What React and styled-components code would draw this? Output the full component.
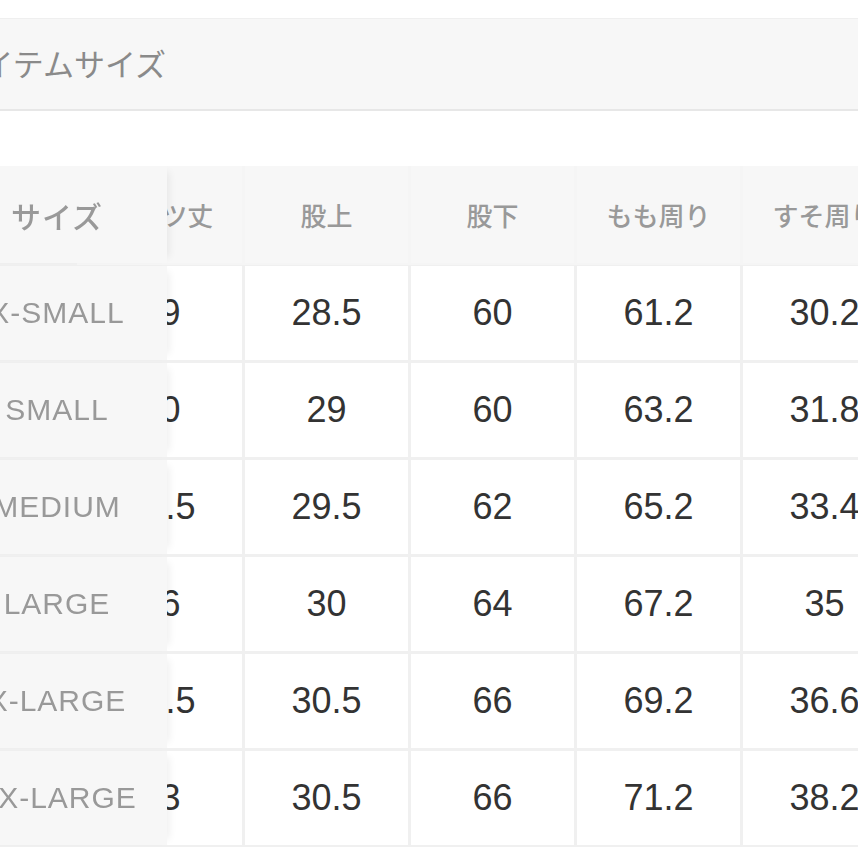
import { useLayoutEffect, useRef } from "react";
import styled, { createGlobalStyle, css } from "styled-components";

const GlobalStyle = createGlobalStyle`
  html, body {
    margin: 0;
    padding: 0;
    background: #ffffff;
    overflow: hidden;
  }
  body {
    font-family: "Liberation Sans", "Noto Sans CJK JP", sans-serif;
  }
`;

const Page = styled.div`
  width: 858px;
  height: 858px;
  overflow: hidden;
  padding-top: 18px;
  box-sizing: border-box;
`;

const TitleBar = styled.div`
  height: 93px;
  display: flex;
  align-items: center;
  padding-bottom: 4px;
  box-sizing: border-box;
  background-color: #f7f7f7;
  border-top: 1px solid #efefef;
  border-bottom: 2px solid #e7e7e7;
`;

const Title = styled.h2`
  margin: 0 0 0 -47px;
  font-family: "Noto Sans CJK JP", sans-serif;
  font-size: 31px;
  font-weight: 400;
  color: #8a8a8a;
  white-space: nowrap;
`;

const ScrollArea = styled.div`
  margin-top: 55px;
  margin-left: -53px;
  width: 911px;
  overflow-x: auto;
  scrollbar-width: none;

  &::-webkit-scrollbar {
    display: none;
  }
`;

const Grid = styled.div`
  display: grid;
  grid-template-columns: 220px repeat(5, 163px);
  grid-template-rows: 97px;
  grid-auto-rows: 94px;
  gap: 3px;
  width: max-content;
  padding-bottom: 2px;
  background-color: #f0f0f0;
`;

const Cell = styled.div`
  display: flex;
  align-items: center;
  justify-content: center;
  background-color: #ffffff;
  color: #333333;
  font-size: 36px;
  white-space: nowrap;

  ${(props) =>
    props.$head &&
    css`
      background-color: #f7f7f7;
      color: #999999;
      font-family: "Noto Sans CJK JP", sans-serif;
      font-size: 26px;
      font-weight: 500;
      box-shadow: 0 0 0 2px #f5f5f5;
    `}

  ${(props) =>
    props.$sticky &&
    css`
      position: sticky;
      left: 0;
      z-index: 1;
      background-color: #f7f7f7;
      color: #999999;
      font-size: 30px;
      letter-spacing: 1px;
      box-shadow: 8px 0 8px -6px rgba(0, 0, 0, 0.07);
    `}
`;

const columns = ["サイズ", "パンツ丈", "股上", "股下", "もも周り", "すそ周り"];

const rows = [
  ["X-SMALL", "89", "28.5", "60", "61.2", "30.2"],
  ["SMALL", "90", "29", "60", "63.2", "31.8"],
  ["MEDIUM", "91.5", "29.5", "62", "65.2", "33.4"],
  ["LARGE", "96", "30", "64", "67.2", "35"],
  ["X-LARGE", "94.5", "30.5", "66", "69.2", "36.6"],
  ["XX-LARGE", "93", "30.5", "66", "71.2", "38.2"],
];

function SizeTable() {
  const scrollRef = useRef(null);

  useLayoutEffect(() => {
    if (scrollRef.current) scrollRef.current.scrollLeft = 91;
  }, []);

  return (
    <ScrollArea ref={scrollRef}>
      <Grid>
        {columns.map((c, i) => (
          <Cell key={c} $head $sticky={i === 0}>
            {c}
          </Cell>
        ))}
        {rows.map((r) =>
          r.map((v, i) => (
            <Cell key={r[0] + i} $sticky={i === 0}>
              {v}
            </Cell>
          ))
        )}
      </Grid>
    </ScrollArea>
  );
}

export default function App() {
  return (
    <>
      <GlobalStyle />
      <Page>
        <TitleBar>
          <Title>アイテムサイズ</Title>
        </TitleBar>
        <SizeTable />
      </Page>
    </>
  );
}
